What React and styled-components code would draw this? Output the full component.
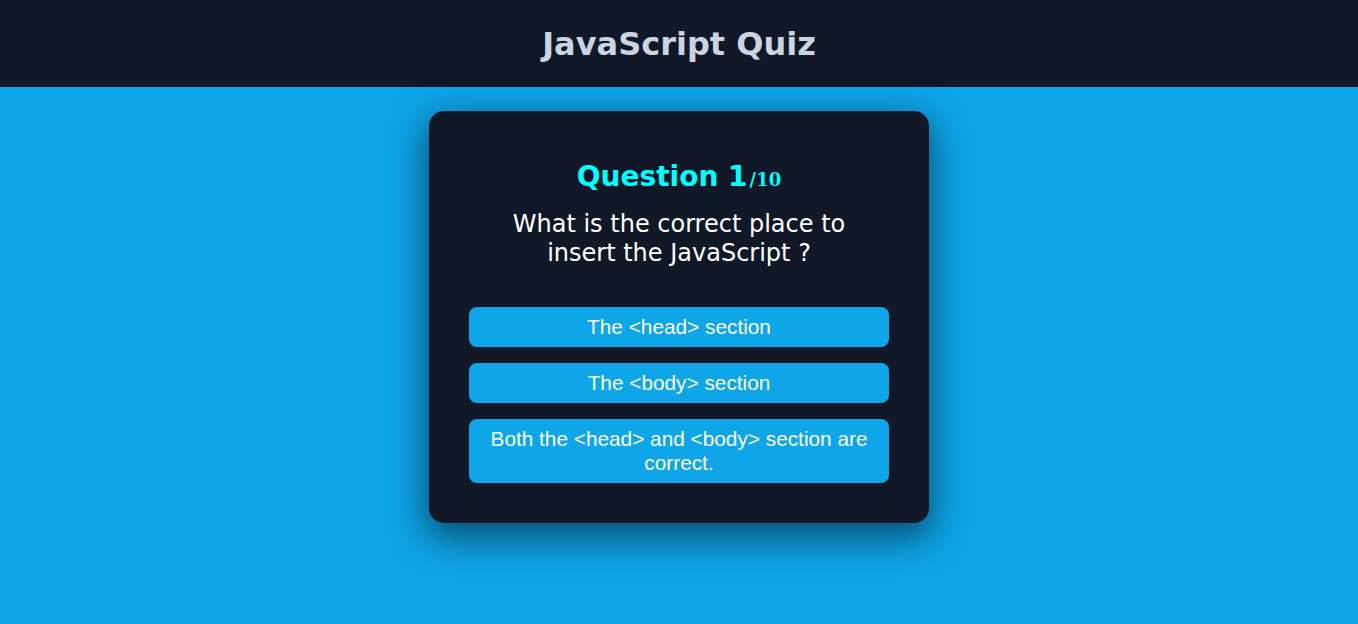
import React from "react";
import styled, { createGlobalStyle } from "styled-components";

const GlobalStyle = createGlobalStyle`
  html, body {
    margin: 0;
    padding: 0;
    background: #0ea5e9;
    min-height: 100%;
  }
  * {
    box-sizing: border-box;
  }
`;

const Page = styled.div`
  min-height: 624px;
  background: #0ea5e9;
  display: flex;
  flex-direction: column;
`;

const Header = styled.header`
  height: 87px;
  background: #111827;
  display: flex;
  align-items: center;
  justify-content: center;
`;

const Title = styled.h1`
  margin: 0;
  font-family: "DejaVu Sans", Verdana, sans-serif;
  font-weight: bold;
  font-size: 32px;
  color: #cbd5e1;
`;

const Main = styled.main`
  display: flex;
  justify-content: center;
  padding-top: 24px;
`;

const Card = styled.section`
  width: 500px;
  background: #111827;
  border-radius: 15px;
  padding: 48px 40px 40px;
  box-shadow: 0 12px 36px 4px rgba(0, 0, 0, 0.5);
  display: flex;
  flex-direction: column;
  align-items: center;
`;

const QuestionNum = styled.h2`
  margin: 0;
  font-family: "DejaVu Sans", Verdana, sans-serif;
  font-weight: bold;
  font-size: 28px;
  line-height: 35px;
  color: #00ffff;

  span {
    margin-left: 2px;
    font-family: "DejaVu Serif", Georgia, serif;
    font-size: 18px;
  }
`;

const QuestionText = styled.p`
  margin: 13px 0 0;
  max-width: 360px;
  text-align: center;
  font-family: "DejaVu Sans", Verdana, sans-serif;
  font-size: 24px;
  line-height: 29px;
  color: #ffffff;
`;

const Options = styled.div`
  width: 100%;
  margin-top: 39px;
  display: flex;
  flex-direction: column;
  gap: 16px;
`;

const Option = styled.button`
  width: 100%;
  min-height: 40px;
  border: none;
  border-radius: 8px;
  background: #0ea5e9;
  color: #ffffff;
  font-family: "Liberation Sans", Arial, sans-serif;
  font-size: 20.8px;
  line-height: 24px;
  padding: 8px 16px;
  cursor: pointer;
`;

const options = [
  "The <head> section",
  "The <body> section",
  "Both the <head> and <body> section are correct.",
];

export default function App() {
  return (
    <>
      <GlobalStyle />
      <Page>
        <Header>
          <Title>JavaScript Quiz</Title>
        </Header>
        <Main>
          <Card>
            <QuestionNum>
              Question 1<span>/10</span>
            </QuestionNum>
            <QuestionText>
              What is the correct place to insert the JavaScript ?
            </QuestionText>
            <Options>
              {options.map((o) => (
                <Option key={o}>{o}</Option>
              ))}
            </Options>
          </Card>
        </Main>
      </Page>
    </>
  );
}
